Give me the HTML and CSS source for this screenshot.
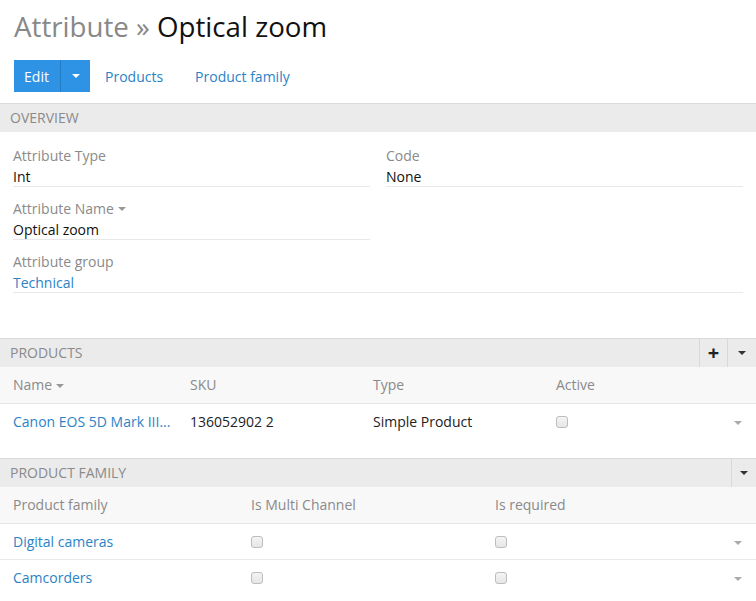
FILE: index.html
```html
<!DOCTYPE html>
<html>
<head>
<meta charset="utf-8">
<link rel="stylesheet" href="styles.css">
</head>
<body>
<h1 class="page-title"><span class="crumb">Attribute »</span> Optical zoom</h1>
<div class="toolbar">
  <div class="btn-group">
    <span class="btn-main">Edit</span>
    <span class="btn-caret"><span class="caret caret-white"></span></span>
  </div>
  <a class="nav-link first">Products</a>
  <a class="nav-link">Product family</a>
</div>

<section class="section">
  <div class="section-head"><span class="section-title">Overview</span></div>
  <div class="fields">
    <div class="field">
      <div class="label">Attribute Type</div>
      <div class="value">Int</div>
    </div>
    <div class="field">
      <div class="label">Code</div>
      <div class="value">None</div>
    </div>
    <div class="field">
      <div class="label">Attribute Name <span class="caret caret-grey"></span></div>
      <div class="value">Optical zoom</div>
    </div>
    <div class="field empty"></div>
    <div class="field wide">
      <div class="label">Attribute group</div>
      <div class="value link">Technical</div>
    </div>
  </div>
</section>

<section class="section products">
  <div class="section-head">
    <span class="section-title">Products</span>
    <span class="head-btns">
      <span class="head-btn plus">+</span>
      <span class="head-btn"><span class="caret caret-dark"></span></span>
    </span>
  </div>
  <table class="grid">
    <colgroup><col class="c-name"><col class="c-sku"><col class="c-type"><col class="c-active"><col class="c-act"></colgroup>
    <thead>
      <tr><th>Name <span class="caret caret-grey"></span></th><th>SKU</th><th>Type</th><th>Active</th><th></th></tr>
    </thead>
    <tbody>
      <tr class="last">
        <td><span class="link ellipsis">Canon EOS 5D Mark III...</span></td>
        <td>136052902 2</td>
        <td>Simple Product</td>
        <td><span class="checkbox"></span></td>
        <td class="act"><span class="caret caret-light"></span></td>
      </tr>
    </tbody>
  </table>
</section>

<section class="section family">
  <div class="section-head">
    <span class="section-title">Product family</span>
    <span class="head-btns">
      <span class="head-btn"><span class="caret caret-dark"></span></span>
    </span>
  </div>
  <table class="grid">
    <colgroup><col class="f-name"><col class="f-multi"><col class="f-req"><col class="f-act"></colgroup>
    <thead>
      <tr><th>Product family</th><th>Is Multi Channel</th><th>Is required</th><th></th></tr>
    </thead>
    <tbody>
      <tr>
        <td><span class="link">Digital cameras</span></td>
        <td><span class="checkbox"></span></td>
        <td><span class="checkbox"></span></td>
        <td class="act"><span class="caret caret-light"></span></td>
      </tr>
      <tr class="last">
        <td><span class="link">Camcorders</span></td>
        <td><span class="checkbox"></span></td>
        <td><span class="checkbox"></span></td>
        <td class="act"><span class="caret caret-light"></span></td>
      </tr>
    </tbody>
  </table>
</section>
</body>
</html>
```

FILE: styles.css
```css
* { box-sizing: border-box; }
html, body { margin: 0; padding: 0; background: #fff; }
body {
  font-family: "Open Sans", "Liberation Sans", sans-serif;
  font-size: 14px;
  color: #222;
  width: 756px;
  overflow: hidden;
}

.page-title {
  margin: 8px 0 0 14px;
  font-size: 27.7px;
  line-height: 36px;
  font-weight: 400;
  color: #111;
}
.crumb { color: #888; }

.toolbar {
  display: flex;
  align-items: center;
  margin: 16px 0 0 14px;
  height: 32px;
}
.btn-group { display: flex; height: 32px; }
.btn-main {
  width: 46px;
  display: flex;
  align-items: center;
  justify-content: center;
  background: #2e93e4;
  color: #fff;
  font-size: 14px;
  padding-right: 1px;
}
.btn-caret {
  width: 30px;
  display: flex;
  align-items: center;
  justify-content: center;
  background: #2e93e4;
  border-left: 1px solid #237dc4;
}
.nav-link {
  color: #2a83c6;
  font-size: 14px;
  padding: 0 17px 0 15px;
  text-decoration: none;
}

.caret {
  display: inline-block;
  width: 0; height: 0;
  border-left: 4px solid transparent;
  border-right: 4px solid transparent;
  border-top: 4px solid #fff;
  vertical-align: middle;
}
.caret-white { border-top-color: #fff; }
.caret-grey { border-top-color: #999; position: relative; top: -1px; }
.caret-dark { border-top-color: #333; }
.caret-light { border-top-color: #aaa; }

.section { margin-top: 11px; }
.section-head {
  display: flex;
  align-items: center;
  justify-content: space-between;
  height: 29px;
  background: #ebebeb;
  border-top: 1px solid #dadada;
  padding-left: 10px;
}
.section-title {
  text-transform: uppercase;
  color: #8a8a8a;
  font-size: 14px;
  position: relative;
  top: -1px;
}
.head-btns { display: flex; height: 100%; }
.head-btn {
  width: 29px;
  display: flex;
  align-items: center;
  justify-content: center;
  border-left: 1px solid #d8d8d8;
}
.head-btn.plus {
  width: 28px;
  font-size: 20px;
  font-weight: 700;
  color: #222;
  line-height: 1;
}
.family .head-btn { width: 25px; }

.fields {
  display: grid;
  grid-template-columns: 357px 357px;
  column-gap: 16px;
  row-gap: 11px;
  padding: 13px 13px 0;
}
.field { border-bottom: 1px solid #e8e8e8; height: 42px; }
.field.empty { border-bottom: none; }
.field.wide { grid-column: 1 / 3; }
.label { color: #8a8a8a; line-height: 22px; height: 22px; }
.value { color: #111; line-height: 19px; height: 19px; }
.link { color: #2a83c6; }

.products { margin-top: 45px; }
.family { margin-top: 19px; }

.grid {
  width: 756px;
  border-collapse: collapse;
  table-layout: fixed;
}
.c-name { width: 177px; }
.c-sku { width: 183px; }
.c-type { width: 183px; }
.c-active { width: 177px; }
.c-act { width: 36px; }
.f-name { width: 238px; }
.f-multi { width: 244px; }
.f-req { width: 238px; }
.f-act { width: 36px; }

.grid th {
  background: #f8f8f8;
  color: #8a8a8a;
  font-weight: 400;
  text-align: left;
  height: 36px;
  padding: 0 0 0 13px;
  border-bottom: 1px solid #e6e6e6;
}
.grid td {
  height: 36px;
  padding: 0 0 0 13px;
  border-bottom: 1px solid #e9e9e9;
  white-space: nowrap;
  overflow: hidden;
}
.grid tr.last td { border-bottom: none; }
.grid td.act { padding: 0 14px 0 0; text-align: right; }
.ellipsis { display: block; overflow: hidden; }

.checkbox {
  display: inline-block;
  width: 12px;
  height: 12px;
  border: 1px solid #bdbdbd;
  border-radius: 3px;
  background: linear-gradient(#f4f4f4, #e6e6e6);
  vertical-align: middle;
  position: relative;
  top: -1px;
}
```
